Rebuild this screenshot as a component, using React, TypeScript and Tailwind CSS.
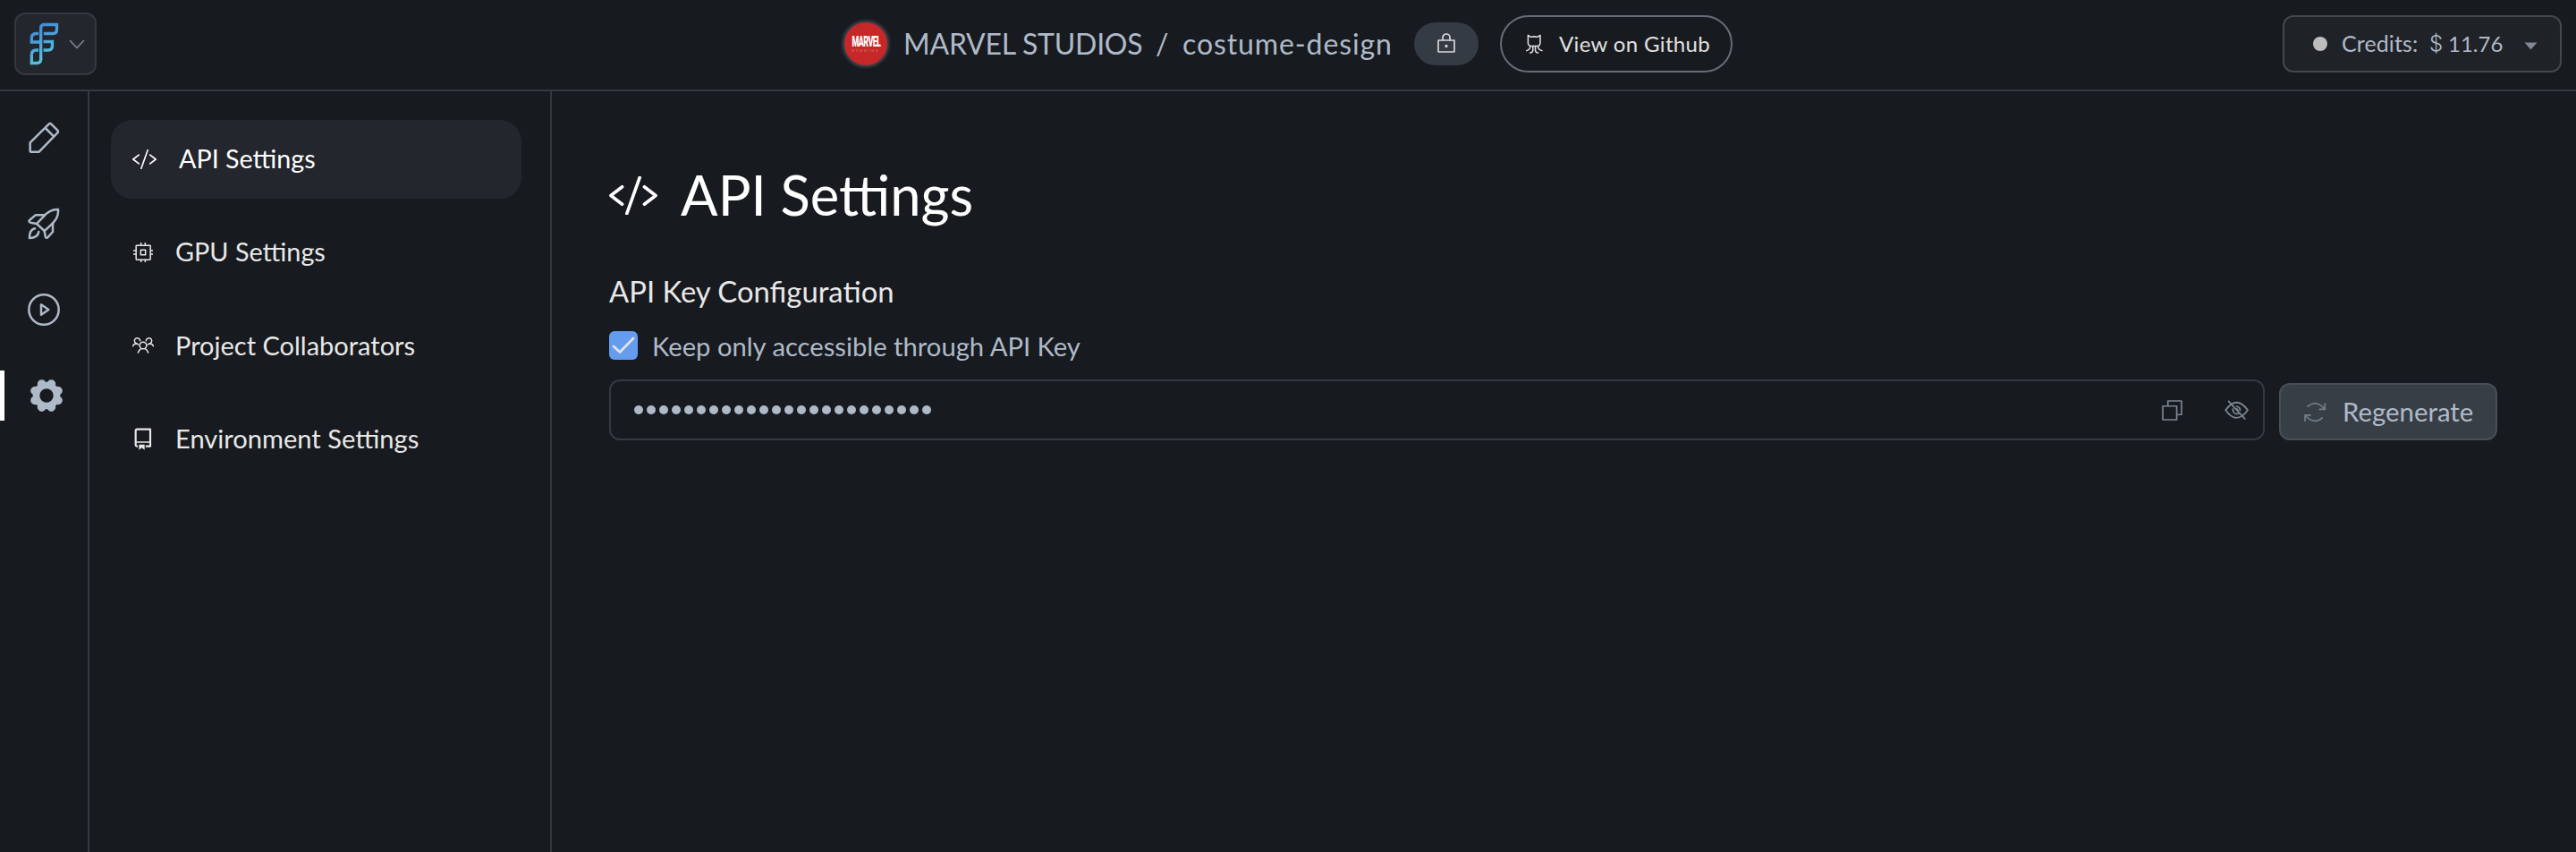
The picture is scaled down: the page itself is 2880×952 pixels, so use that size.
import type { ReactNode } from "react";

const stroke = {
  fill: "none",
  stroke: "currentColor",
  strokeLinecap: "round",
  strokeLinejoin: "round",
} as const;

function Logo() {
  return (
    <svg viewBox="100 75 98 144" className="h-12 w-[33px] shrink-0" fill="none" strokeWidth="10">
      <defs>
        <linearGradient id="brand" gradientUnits="userSpaceOnUse" x1="110" y1="85" x2="175" y2="200">
          <stop offset="0" stopColor="#4285d8" />
          <stop offset="1" stopColor="#56c8dc" />
        </linearGradient>
      </defs>
      <g stroke="url(#brand)">
        <path d="M137.500 200V94Q137.500 82.500 149 82.500H191V98Q191 112.500 177 112.500H147" />
        <path d="M130 112.500H122Q106.500 113 106.500 128V141H133" />
        <path d="M146 139.500H176V153Q176 168 162 168H146" />
        <path d="M130 168H122Q106.500 168 106.500 184V211.500H124Q137.500 211.500 137.500 198" />
      </g>
    </svg>
  );
}

function PencilIcon() {
  return (
    <svg viewBox="93 48 108 108" className="size-9" {...stroke} strokeWidth="7.500">
      <path d="M104 149Q101 149 101 146V118L164 56Q168 52 172 56L193 77Q197 81 193 85L131 149ZM152 69L180 97" />
    </svg>
  );
}

function RocketIcon() {
  return (
    <svg viewBox="93 336 108 108" className="size-9" {...stroke} strokeWidth="7.500">
      <path d="M195 342C172 341 155 355 145 367L123 390L149 414L170 395C187 378 197 365 195 342Z" />
      <path d="M150 361H119L99 378Q95 384 102 386L123 390" />
      <path d="M177 388V417L161 435Q154 441 152 432L149 414" />
      <path d="M117 406Q98 411 99 438Q127 437 130 417" />
    </svg>
  );
}

function PlayIcon() {
  return (
    <svg viewBox="0 0 108 108" className="size-9" {...stroke} strokeWidth="7.500">
      <circle cx="54" cy="54" r="50" />
      <path d="M45 37V71L70 54Z" />
    </svg>
  );
}

function GearIcon() {
  return (
    <svg viewBox="-57 -57 114 114" className="size-[38px]" fill="currentColor">
      <circle r="46" />
      {[22.5, 67.5, 112.5, 157.5, 202.5, 247.5, 292.5, 337.5].map((a) => (
        <circle key={a} cy="-42" r="14.500" transform={`rotate(${a})`} />
      ))}
      <circle r="23" fill="#171a1e" />
    </svg>
  );
}

function CodeIcon({ className, width }: { className: string; width: number }) {
  return (
    <svg viewBox="55 51 82 66" className={className} {...stroke} strokeWidth={width}>
      <path d="M77 69L57.500 84L77 99M107 53L85 115M115 69L134.500 84L115 99" />
    </svg>
  );
}

function ChipIcon() {
  return (
    <svg viewBox="57 363 66 66" className="size-[22px]" {...stroke} strokeWidth="4.500">
      <rect x="66.500" y="372.500" width="48" height="48" rx="2" />
      <rect x="82" y="388" width="16" height="16" />
      <path d="M83 371V364M97 371V364M83 421V428M97 421V428M65 390H58M65 402H58M115 390H122M115 402H122" />
    </svg>
  );
}

function PeopleIcon() {
  return (
    <svg viewBox="54 678 72 66" className="h-[22px] w-6" {...stroke} strokeWidth="4.500">
      <circle cx="90" cy="711" r="11.500" />
      <path d="M73 735Q76 725 84 722M107 735Q104 725 96 722" />
      <path d="M66 704A9.500 9.500 0 1 1 80 695M56 713Q58 705 70 705L74 708" />
      <path d="M114 704A9.500 9.500 0 1 0 100 695M124 713Q122 705 110 705L106 708" />
    </svg>
  );
}

function RepoIcon() {
  return (
    <svg viewBox="61 981 60 75" className="h-[25px] w-5" {...stroke} strokeWidth="6.500">
      <path d="M70 1043Q66 1042 66 1038V992Q66 986 72 986H115V1043H102" />
      <path d="M67 1029H115" strokeWidth="4.500" />
      <path d="M77 1037H96V1055L86.500 1048L77 1055Z" fill="currentColor" stroke="none" />
    </svg>
  );
}

function LockIcon() {
  return (
    <svg viewBox="0 0 20 22" className="h-[22px] w-5" {...stroke} strokeWidth="1.700">
      <rect x="1" y="8" width="18" height="13" rx=".5" />
      <path d="M6 8V5a4 4 0 0 1 8 0V8" />
      <circle cx="10" cy="14.500" r=".8" fill="currentColor" />
    </svg>
  );
}

function CatIcon() {
  return (
    <svg viewBox="79 57 56 65" className="h-[22px] w-[19px]" {...stroke} strokeWidth="4.500">
      <path d="M86 61L95 67Q106 64 117 67L126 61V84Q127 96 116 97H96Q85 96 86 84Z" />
      <path d="M93 98Q93 108 81 112M102 98V111Q101 118 93 119M110 98V111Q111 118 119 119M119 98Q119 108 132 112" />
    </svg>
  );
}

function CopyIcon() {
  return (
    <svg viewBox="110 110 68 68" className="h-[23px] w-[23px]" {...stroke} strokeWidth="5">
      <path d="M113 130H159V175H113ZM130 129V113H175V158H160" />
    </svg>
  );
}

function EyeOffIcon() {
  return (
    <svg viewBox="322 110 82 66" className="h-[22px] w-[27px]" {...stroke} strokeWidth="5.500">
      <path d="M326 144Q344 118 363 118Q382 118 401 144Q382 170 363 170Q344 170 326 144Z" />
      <path d="M351 140A13 13 0 0 0 371 154M375 144A13 13 0 0 0 363 131M336 114L391 173M363 140A6 6 0 0 1 368 145" />
    </svg>
  );
}

function RefreshIcon() {
  return (
    <svg viewBox="588 116 74 68" className="h-[23px] w-[25px]" {...stroke} strokeWidth="5">
      <path d="M600 131Q628 107 656 140M657 122V141H639M648 169Q622 193 592 161M591 179V160H609" />
    </svg>
  );
}

const nav: { label: string; icon: ReactNode; cell: string; text: string; active?: boolean }[] = [
  {
    label: "API Settings",
    icon: <CodeIcon className="h-[22px] w-[27px]" width={5} />,
    cell: "w-[52px]",
    text: "text-[28.700px]",
    active: true,
  },
  { label: "GPU Settings", icon: <ChipIcon />, cell: "w-12 pl-px", text: "text-[28.800px]" },
  { label: "Project Collaborators", icon: <PeopleIcon />, cell: "w-12", text: "text-[29px]" },
  { label: "Environment Settings", icon: <RepoIcon />, cell: "w-12 pl-0.5", text: "text-[29.100px]" },
];

const rail = [
  { name: "edit", icon: <PencilIcon /> },
  { name: "deploy", icon: <RocketIcon /> },
  { name: "run", icon: <PlayIcon /> },
];

function Header() {
  return (
    <header className="flex h-[102px] shrink-0 items-center border-b-2 border-[#343942] px-4 pb-0.5 text-[#afbac9]">
      <button className="flex h-[70px] w-[92px] shrink-0 items-center rounded-xl border-2 border-[#35383d] bg-[#23262d] pl-[15px]">
        <Logo />
        <svg viewBox="0 0 18 11" className="ml-[11px] h-[11px] w-[18px] text-[#7b8490]" {...stroke} strokeWidth="1.700">
          <path d="M1.500 1.500L9 9.500L16.500 1.500" />
        </svg>
      </button>

      <div className="ml-[832px] flex items-center">
        <div className="flex size-14 shrink-0 items-center justify-center rounded-full border-2 border-[#24282d] bg-[#353b47]">
          <div className="flex size-12 flex-col items-center justify-center rounded-full bg-[#c62828] text-white">
            <span className="mt-px origin-center scale-x-[.74] scale-y-[1.35] font-['Roboto'] text-[12px] leading-3 font-black tracking-[-0.8px]">
              MARVEL
            </span>
            <span className="mt-0.5 text-[4px] leading-[4px] tracking-[2px] opacity-40">STUDIOS</span>
          </div>
        </div>
        <div className="flex h-12 items-center pl-[14px] text-[32px] whitespace-nowrap">
          <span className="w-[282px] tracking-[-0.24px]">MARVEL STUDIOS</span>
          <span className="w-[30px]">/</span>
          <span className="w-[259px] tracking-[0.9px]">costume-design</span>
        </div>
        <div className="flex h-12 w-[72px] shrink-0 items-center justify-center rounded-full bg-[#353b44] pb-0.5 text-[#d8d8d8]">
          <LockIcon />
        </div>
        <button className="ml-6 flex h-16 w-[260px] shrink-0 items-center rounded-full border-2 border-[#666d77] pl-[27px] text-[#e0e0e0]">
          <CatIcon />
          <span className="ml-[18px] pb-px text-[24px] tracking-[0.35px] whitespace-nowrap">View on Github</span>
        </button>
      </div>

      <button className="ml-auto flex h-16 w-[312px] shrink-0 items-center rounded-xl border-2 border-[#44484d] bg-[#1f2226] pl-8 whitespace-nowrap">
        <span className="size-4 rounded-full bg-[#bdbdbd]" />
        <span className="ml-4 w-[98px] pb-px text-left text-[25px] tracking-[0.1px]">Credits:</span>
        <span className="w-[21px] text-left font-['Inter'] text-[24px] font-light">$</span>
        <span className="w-[84px] pb-px text-left text-[24px]">11.76</span>
        <svg viewBox="0 0 15 9" className="mt-1 ml-px h-[9px] w-[15px]" fill="#7f8895">
          <path d="M.5 .5H14.500L7.500 8.500Z" />
        </svg>
      </button>
    </header>
  );
}

export default function App() {
  return (
    <div className="flex h-[952px] w-[2880px] flex-col overflow-hidden bg-[#171a1e] font-['Lato','Liberation_Sans',sans-serif] text-[#e8e8e8]">
      <Header />
      <div className="flex min-h-0 flex-1">
        <aside className="flex w-[100px] shrink-0 flex-col border-r-2 border-[#343942] pt-1 text-[#afbac9]">
          {rail.map((r) => (
            <button key={r.name} aria-label={r.name} className="flex h-24 items-center justify-center">
              {r.icon}
            </button>
          ))}
          <button aria-label="settings" className="flex h-24 items-center">
            <span className="h-14 w-[5px] bg-white" />
            <span className="ml-7">
              <GearIcon />
            </span>
          </button>
        </aside>

        <nav className="flex w-[517px] shrink-0 flex-col gap-4 border-r-2 border-[#34373c] pt-8 pr-8 pl-6">
          {nav.map((n) => (
            <a
              key={n.label}
              className={
                "flex h-[88px] items-center rounded-3xl pl-6 whitespace-nowrap " +
                (n.active ? "bg-[#23262d] text-white" : "")
              }
            >
              <span className={"flex shrink-0 items-center " + n.cell}>{n.icon}</span>
              <span className={n.text}>{n.label}</span>
            </a>
          ))}
        </nav>

        <main className="flex flex-1 flex-col pt-[76px] pr-[88px] pl-16 whitespace-nowrap">
          <div className="flex h-20 items-center text-white">
            <CodeIcon className="h-[43px] w-[54px]" width={5.5} />
            <h1 className="ml-[26px] pb-[3px] text-[61.500px] leading-[72px]">API Settings</h1>
          </div>
          <h2 className="mt-11 h-12 text-[32.800px] leading-[48px]">API Key Configuration</h2>
          <label className="mt-5 flex h-8 items-center text-[#afbac9]">
            <span className="flex size-8 items-center justify-center rounded-md bg-[#669cf0] text-[#dfe3e8]">
              <svg viewBox="0 0 26 20" className="h-5 w-[26px]" {...stroke} strokeWidth="2.800">
                <path d="M2 11L9 17.500L24 2" />
              </svg>
            </span>
            <span className="ml-4 pt-0.5 text-[29.200px] leading-8">Keep only accessible through API Key</span>
          </label>
          <div className="mt-[22px] flex items-start gap-4">
            <div className="flex h-[68px] w-[1851px] items-center rounded-xl border-2 border-[#343942] pr-4 pl-[26px] text-[#7b8592]">
              <div className="flex gap-1">
                {Array.from({ length: 24 }, (_, i) => (
                  <span key={i} className="h-[10.500px] w-[10px] rounded-full bg-[#afbac9]" />
                ))}
              </div>
              <span className="ml-auto">
                <CopyIcon />
              </span>
              <span className="ml-[47px]">
                <EyeOffIcon />
              </span>
            </div>
            <button className="mt-1 flex h-16 w-[244px] items-center rounded-xl border-2 border-[#484f57] bg-[#383e46] pl-[26px] text-[#afbac9]">
              <span className="text-[#737d89]">
                <RefreshIcon />
              </span>
              <span className="ml-[18px] text-[29.400px] leading-8">Regenerate</span>
            </button>
          </div>
        </main>
      </div>
    </div>
  );
}
